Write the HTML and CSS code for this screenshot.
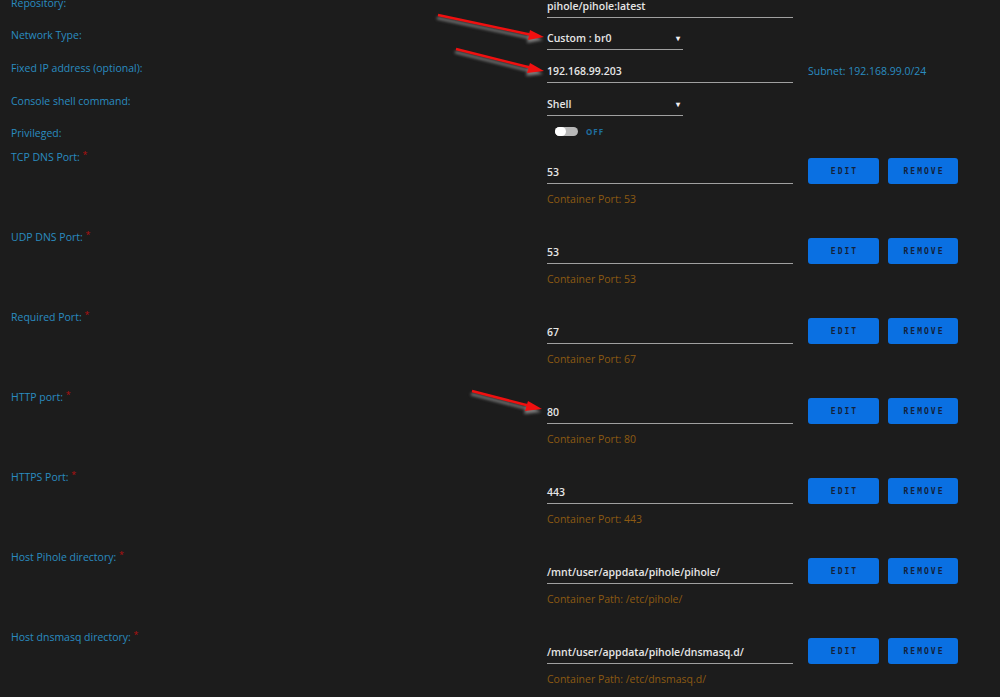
FILE: index.html
```html
<!DOCTYPE html>
<html lang="en">
<head>
    <meta charset="UTF-8">
    <title>Add Container</title>
    <link rel="stylesheet" href="styles.css">
</head>
<body>
    <div id="form">
        <div class="row row-repo">
            <div class="label">Repository:</div>
            <div class="field wide">pihole/pihole:latest</div>
        </div>
        <div class="row row-top">
            <div class="label">Network Type:</div>
            <div class="field select">Custom : br0<span class="caret">&#9662;</span></div>
        </div>
        <div class="row row-top">
            <div class="label">Fixed IP address (optional):</div>
            <div class="field wide">192.168.99.203</div>
            <div class="aside note">Subnet: 192.168.99.0/24</div>
        </div>
        <div class="row row-console">
            <div class="label">Console shell command:</div>
            <div class="field select">Shell<span class="caret">&#9662;</span></div>
        </div>
        <div class="row row-priv">
            <div class="label">Privileged:</div>
            <div class="toggle-wrap">
                <span class="toggle"><span class="knob"></span></span>
                <span class="toggle-text">OFF</span>
            </div>
        </div>

        <div class="row port">
            <div class="label">TCP DNS Port: <span class="req">*</span></div>
            <div class="col">
                <div class="field wide">53</div>
                <div class="hint">Container Port: 53</div>
            </div>
            <div class="aside buttons"><button>EDIT</button><button>REMOVE</button></div>
        </div>
        <div class="row port">
            <div class="label">UDP DNS Port: <span class="req">*</span></div>
            <div class="col">
                <div class="field wide">53</div>
                <div class="hint">Container Port: 53</div>
            </div>
            <div class="aside buttons"><button>EDIT</button><button>REMOVE</button></div>
        </div>
        <div class="row port">
            <div class="label">Required Port: <span class="req">*</span></div>
            <div class="col">
                <div class="field wide">67</div>
                <div class="hint">Container Port: 67</div>
            </div>
            <div class="aside buttons"><button>EDIT</button><button>REMOVE</button></div>
        </div>
        <div class="row port">
            <div class="label">HTTP port: <span class="req">*</span></div>
            <div class="col">
                <div class="field wide">80</div>
                <div class="hint">Container Port: 80</div>
            </div>
            <div class="aside buttons"><button>EDIT</button><button>REMOVE</button></div>
        </div>
        <div class="row port">
            <div class="label">HTTPS Port: <span class="req">*</span></div>
            <div class="col">
                <div class="field wide">443</div>
                <div class="hint">Container Port: 443</div>
            </div>
            <div class="aside buttons"><button>EDIT</button><button>REMOVE</button></div>
        </div>
        <div class="row port">
            <div class="label">Host Pihole directory: <span class="req">*</span></div>
            <div class="col">
                <div class="field wide">/mnt/user/appdata/pihole/pihole/</div>
                <div class="hint">Container Path: /etc/pihole/</div>
            </div>
            <div class="aside buttons"><button>EDIT</button><button>REMOVE</button></div>
        </div>
        <div class="row port">
            <div class="label">Host dnsmasq directory: <span class="req">*</span></div>
            <div class="col">
                <div class="field wide">/mnt/user/appdata/pihole/dnsmasq.d/</div>
                <div class="hint">Container Path: /etc/dnsmasq.d/</div>
            </div>
            <div class="aside buttons"><button>EDIT</button><button>REMOVE</button></div>
        </div>
    </div>

    <!-- annotation arrows drawn over the screenshot -->
    <svg class="arrows" width="1000" height="697" viewBox="0 0 1000 697">
        <g class="arrow">
            <line x1="438" y1="15" x2="532" y2="35"/>
            <polygon points="544,37 530,30 528,40"/>
        </g>
        <g class="arrow">
            <line x1="456" y1="49" x2="532" y2="68"/>
            <polygon points="544,71 530,63 527,73"/>
        </g>
        <g class="arrow">
            <line x1="472" y1="391" x2="530" y2="406"/>
            <polygon points="542,409 528,401 525,411"/>
        </g>
    </svg>
</body>
</html>
```

FILE: styles.css
```css
body {
    margin: 0;
    background-color: #1c1c1c;
    font-family: "Open Sans", "Noto Sans", sans-serif;
    overflow: hidden;
    position: relative;
}

#form {
    display: flex;
    flex-direction: column;
    margin-top: -4px;
}

.row {
    display: flex;
    align-items: flex-start;
}
.row-repo { height: 32px; }
.row-top { height: 33px; }
.row-console { height: 32px; }
.row-priv { height: 24px; }
.row.port { height: 80px; }

.label {
    width: 536px;
    padding-left: 11px;
    font-size: 10.5px;
    line-height: 14px;
    color: #2a8cc0;
    flex-shrink: 0;
}
.req {
    color: #b01010;
    font-size: 9px;
    vertical-align: top;
    position: relative;
    top: -2px;
}

.field {
    box-sizing: border-box;
    padding: 3px 0 4px 0;
    font-size: 10.5px;
    line-height: 14px;
    font-weight: 600;
    color: #e6e6e6;
    border-bottom: 1px solid #a0a0a0;
    flex-shrink: 0;
}
.field.wide { width: 246px; }
.field.select {
    width: 136px;
    display: flex;
    justify-content: space-between;
}
.caret {
    font-size: 8px;
    color: #f0f0f0;
    padding-right: 3px;
}

.aside { margin-left: 15px; }
.note {
    padding-top: 3px;
    font-size: 10.5px;
    line-height: 14px;
    color: #2a8cc0;
}

.toggle-wrap {
    display: flex;
    align-items: center;
    gap: 8px;
    padding-left: 8px;
    height: 10px;
}
.toggle {
    display: flex;
    width: 23px;
    height: 9px;
    border-radius: 5px;
    background-color: #b8b8b8;
}
.knob {
    width: 11px;
    height: 9px;
    border-radius: 5px;
    background-color: #ffffff;
}
.toggle-text {
    font-size: 8px;
    font-weight: 700;
    letter-spacing: 1px;
    color: #1f6fa0;
}

.port .col {
    width: 246px;
    padding-top: 12px;
    flex-shrink: 0;
}
.hint {
    margin-top: 8px;
    font-size: 10.5px;
    line-height: 14px;
    color: #8c5a12;
}

.buttons {
    display: flex;
    gap: 9px;
    padding-top: 8px;
}
.buttons button {
    width: 71px;
    height: 26px;
    border: none;
    border-radius: 3px;
    background-color: #0a70e2;
    color: #13223a;
    font-family: "DejaVu Sans Mono", monospace;
    font-size: 8px;
    font-weight: 700;
    letter-spacing: 2px;
    padding: 0 0 0 2px;
}
.buttons button + button { width: 70px; }

.arrows {
    position: absolute;
    left: 0;
    top: 0;
    pointer-events: none;
}
.arrow {
    filter: drop-shadow(-1px 3px 1.5px rgba(150, 150, 150, 0.8));
}
.arrow line {
    stroke: #f01010;
    stroke-width: 2.5;
}
.arrow polygon {
    fill: #f01010;
}
```
